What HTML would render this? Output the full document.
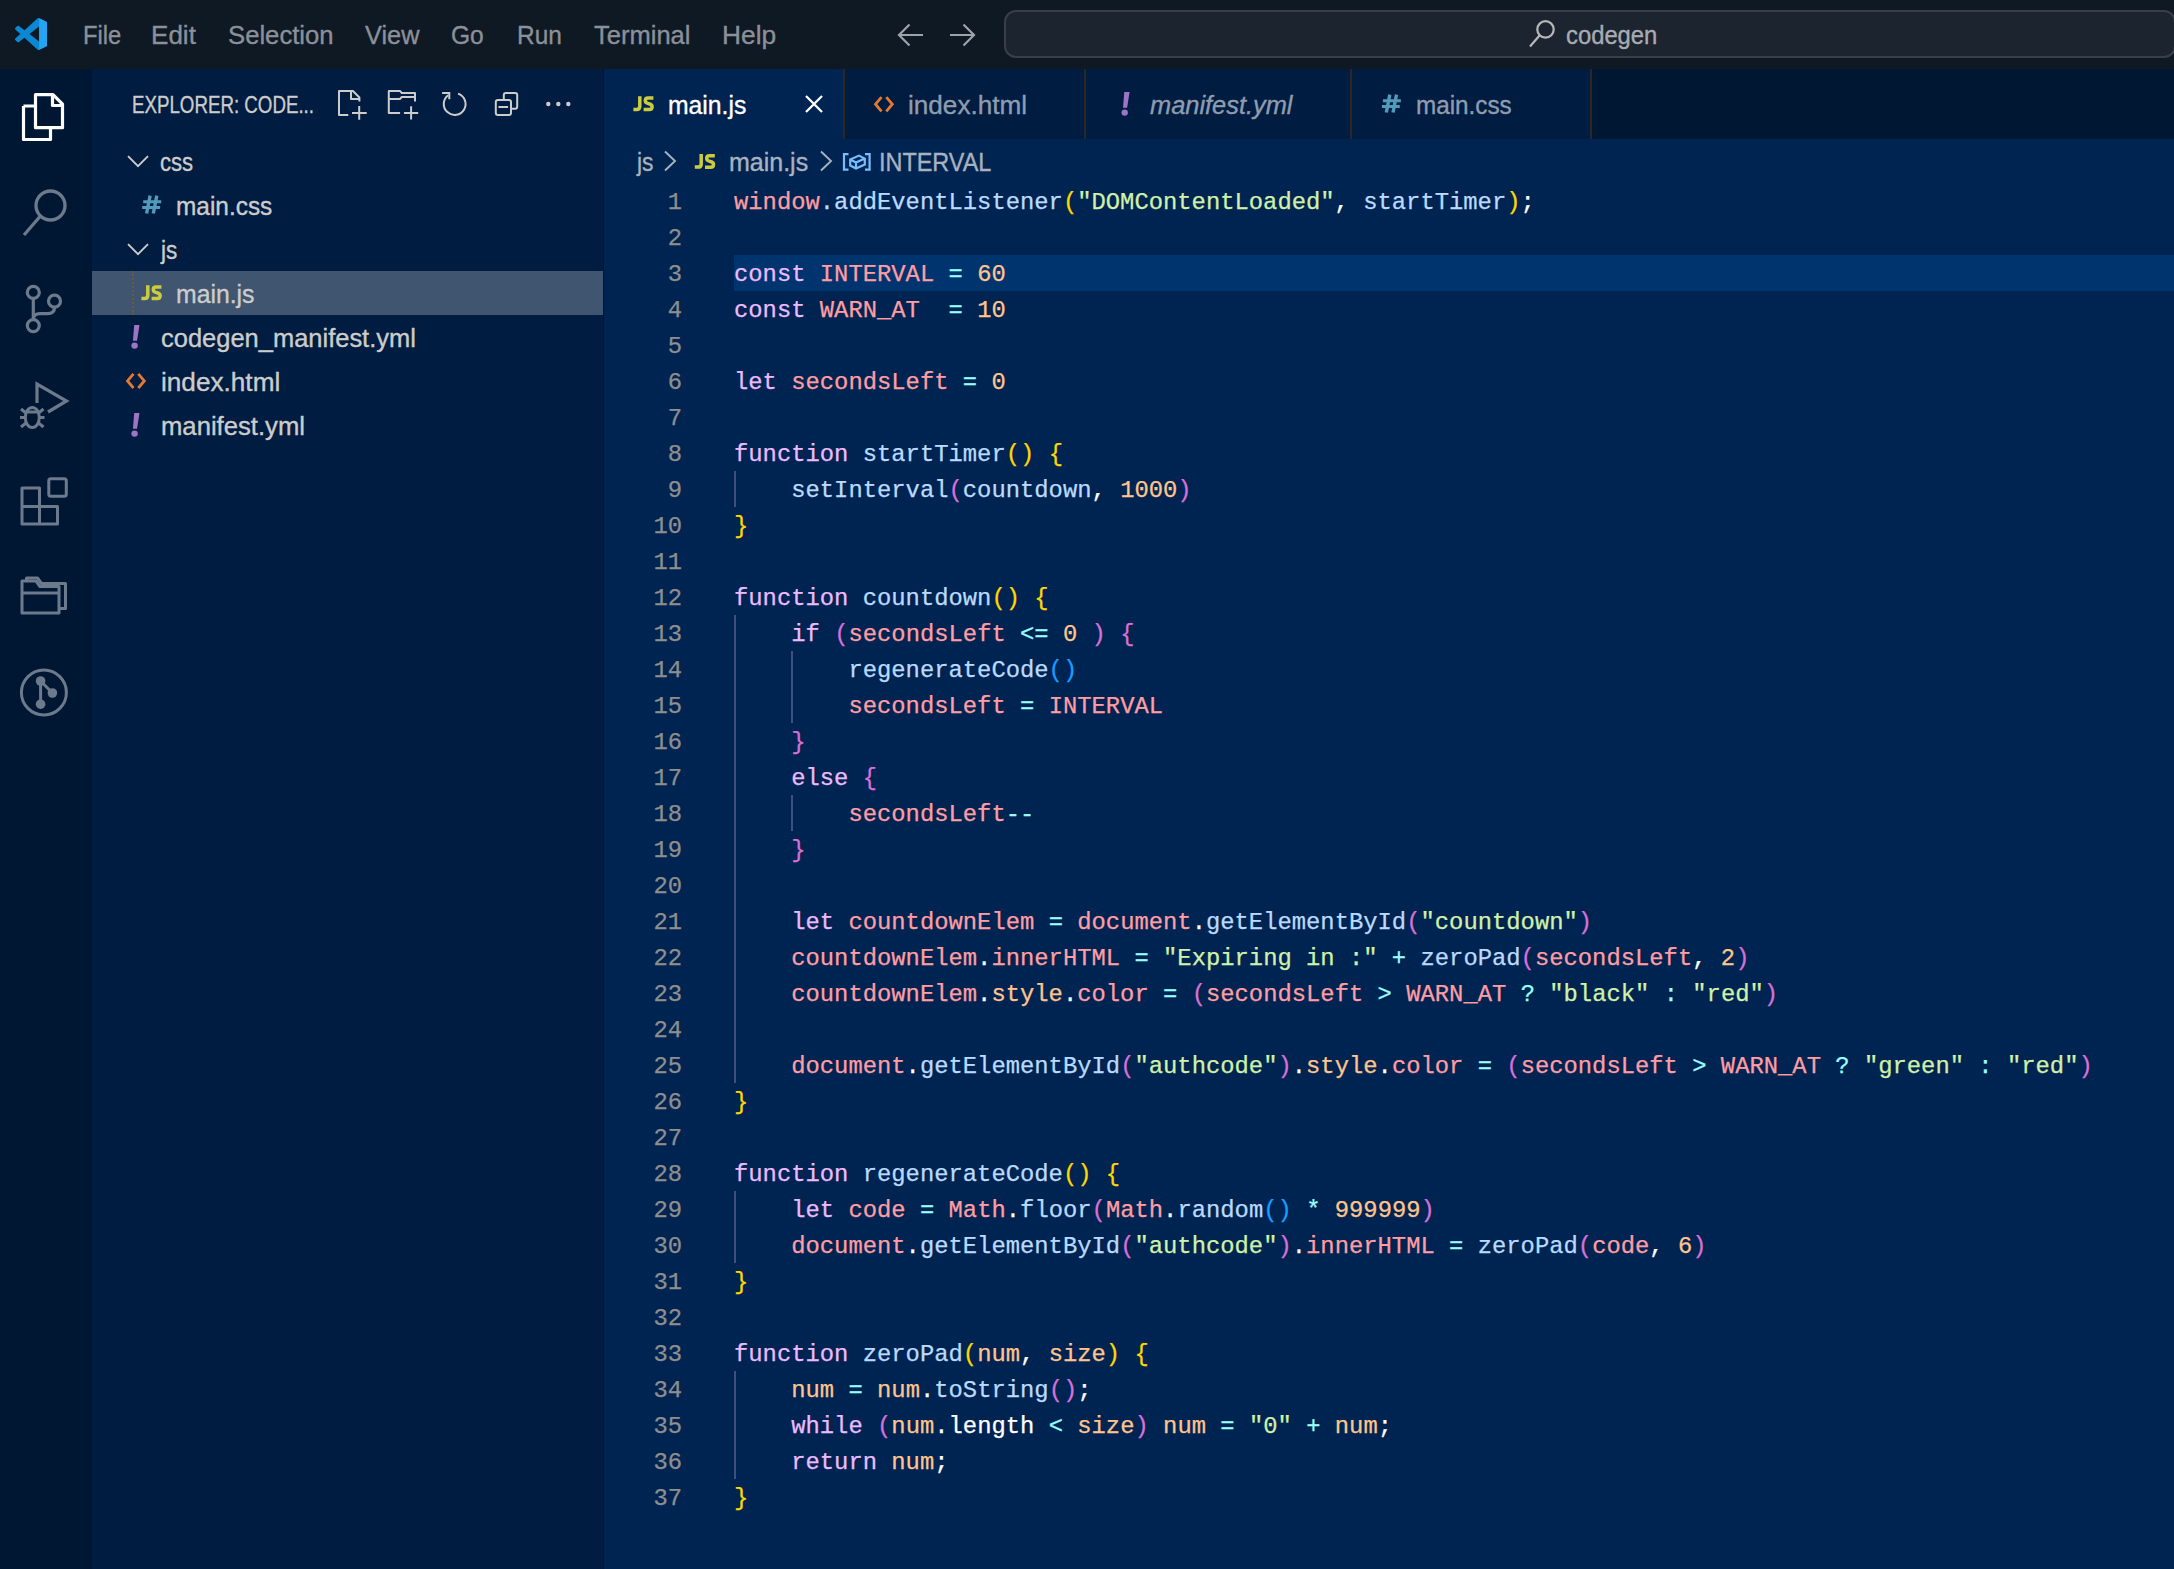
<!DOCTYPE html>
<html><head><meta charset="utf-8">
<style>
*{margin:0;padding:0;box-sizing:border-box}
html,body{width:2174px;height:1569px;overflow:hidden;background:#002451}
body{position:relative;font-family:"Liberation Sans",sans-serif}
.abs{position:absolute}
#title{position:absolute;left:0;top:0;width:2174px;height:69px;background:#0f1924}
.menu{position:absolute;top:19px;height:36px;line-height:36px;font-size:24.5px;color:#8b9099;white-space:nowrap}
#act{position:absolute;left:0;top:69px;width:92px;height:1500px;background:#001733}
#side{position:absolute;left:92px;top:69px;width:512px;height:1500px;background:#001c40}
#sel{position:absolute;left:92px;top:271px;width:512px;height:44px;background:#405570}
.ti{position:absolute;height:44px;line-height:48px;font-size:24.3px;color:#cccccc;white-space:nowrap}
.ico{position:absolute;white-space:nowrap;line-height:1}
#exphdr{position:absolute;left:133px;top:85px;height:40px;line-height:40px;font-size:21px;letter-spacing:-0.9px;color:#cccccc;white-space:nowrap}
#tabstrip{position:absolute;left:604px;top:69px;width:1570px;height:70px;background:#001733}
.tab{position:absolute;top:69px;height:70px;background:#001c40}
.tabb{position:absolute;top:69px;width:2px;height:70px;background:#2b2722}
.tt{position:absolute;top:69px;height:70px;line-height:70px;font-size:24.5px;white-space:nowrap}
.bc{position:absolute;top:139px;height:44px;line-height:44px;font-size:24.5px;color:#a9b2bf;white-space:nowrap}
#hl{position:absolute;left:734px;top:255px;width:1440px;height:36px;background:#00346e}
.ln{position:absolute;left:604px;width:78px;height:36px;line-height:40px;-webkit-text-stroke:0.25px currentColor;text-align:right;font-family:"Liberation Mono",monospace;font-size:23.830px;color:#8e8e8e}
.cl{position:absolute;left:734px;height:36px;line-height:40px;-webkit-text-stroke:0.25px currentColor;font-family:"Liberation Mono",monospace;font-size:23.830px;color:#fff;white-space:pre}
.ig{position:absolute;width:2px;background:#404f7d}
.tx{position:absolute;z-index:5;line-height:normal;-webkit-text-stroke:0.35px currentColor;white-space:nowrap;transform-origin:0 0}
#search{position:absolute;left:1004px;top:10px;width:1172px;height:48px;border:2px solid #393f4a;border-radius:12px;background:#1c2430}
</style></head><body>
<div id="title"></div>

<svg class="abs" style="left:14.8px;top:17.8px" width="32.2" height="32" viewBox="0 0 100 100">
 <path fill="#0a88d4" d="M96.46 10.8L75.86.87a6.23 6.23 0 0 0-7.1 1.2L29.35 38.04 12.19 25.01a4.16 4.16 0 0 0-5.32.24L1.36 30.26a4.17 4.17 0 0 0 0 6.16L16.25 50 1.36 63.58a4.17 4.17 0 0 0 0 6.16l5.51 5.01a4.16 4.16 0 0 0 5.32.24l17.16-13.03 39.41 35.97a6.22 6.22 0 0 0 7.1 1.2l20.6-9.92a6.25 6.25 0 0 0 3.54-5.63V16.43a6.25 6.25 0 0 0-3.54-5.63zm-21.45 62.7L45.1 50l29.91-23.5z"/>
 <path fill="#23a5f1" d="M75.2 0.9 L96.46 10.8 a6.25 6.25 0 0 1 3.54 5.63 V83.57 a6.25 6.25 0 0 1 -3.54 5.63 L75.2 99.1 Z"/>
</svg>

<svg class="abs" style="left:890px;top:18px" width="100" height="34" viewBox="890 18 100 34" fill="none" stroke="#9da3ab" stroke-width="2.2">
 <path d="M923 35 H899 M909.5 24.5 L899 35 L909.5 45.5"/>
 <path d="M950 35 H974 M963.5 24.5 L974 35 L963.5 45.5"/>
</svg>
<div id="search"></div>
<svg class="abs" style="left:1525px;top:17px" width="32" height="34" viewBox="1525 17 32 34" fill="none" stroke="#b8b8b8" stroke-width="2.2">
 <circle cx="1545.5" cy="29.4" r="8.2"/><path d="M1539.5 35.5 L1530 46.5"/>
</svg>
<div id="act"></div>

<svg class="abs" style="left:0;top:69px" width="92" height="700" viewBox="0 69 92 700" fill="none" stroke-linejoin="round">
 <!-- explorer -->
 <path d="M23.5 106 h11 M23.5 106 v33.5 h27 v-11" stroke="#fff" stroke-width="3.2"/>
 <path d="M35.5 94.7 h17.5 l9.5 9.5 v23.5 h-27 z" stroke="#fff" stroke-width="3.2"/>
 <path d="M52.5 95 v10.5 h10" stroke="#fff" stroke-width="3.2"/>
 <!-- search -->
 <circle cx="50.5" cy="205.5" r="14.5" stroke="#6c7a8c" stroke-width="3.3"/>
 <path d="M40 216.5 L24 235" stroke="#6c7a8c" stroke-width="3.3"/>
 <!-- source control -->
 <circle cx="33.3" cy="292.4" r="6" stroke="#6c7a8c" stroke-width="3.2"/>
 <circle cx="33.3" cy="325.6" r="6" stroke="#6c7a8c" stroke-width="3.2"/>
 <circle cx="54.5" cy="301.2" r="6" stroke="#6c7a8c" stroke-width="3.2"/>
 <path d="M33.3 298.5 v21 M54.5 307.2 q0 6.5 -7 6.5 h-7.5 q-6.7 0 -6.7 6" stroke="#6c7a8c" stroke-width="3.2"/>
 <!-- run & debug -->
 <path d="M37 403 V384 L66.5 401 L48 412" stroke="#6c7a8c" stroke-width="3.2" stroke-linejoin="miter"/>
 <ellipse cx="32.3" cy="417.5" rx="7" ry="10" stroke="#6c7a8c" stroke-width="3"/>
 <path d="M25.5 412 h14 M21 409 l5 4 M43.5 409 l-5 4 M20 417.5 h5 M39.5 417.5 h5 M21 427 l5 -4 M43.5 427 l-5 -4" stroke="#6c7a8c" stroke-width="3"/>
 <!-- extensions -->
 <path d="M22 488 h17.5 v18.5 h18 v17.5 h-35.5 z M22 506.5 h17.5 v17.5" stroke="#6c7a8c" stroke-width="3" stroke-linejoin="round"/>
 <rect x="48.8" y="478.7" width="17.5" height="17.5" rx="2" stroke="#6c7a8c" stroke-width="3"/>
 <!-- folder / remote -->
 <path d="M22 581 h14 l4 5.5 h19 v26.5 h-37 z M22 593 h37" stroke="#6c7a8c" stroke-width="3"/>
 <path d="M26.5 581 v-3 h11 l4 5.5 h24 v25 h-6" stroke="#6c7a8c" stroke-width="3"/>
 <!-- git graph -->
 <circle cx="43.9" cy="692.5" r="22.5" stroke="#6c7a8c" stroke-width="3"/>
 <path d="M40.6 681 v23.2 M40.6 681 l11.8 12" stroke="#6c7a8c" stroke-width="3"/>
 <circle cx="40.6" cy="681" r="4.8" fill="#6c7a8c"/>
 <circle cx="52.4" cy="693" r="4.8" fill="#6c7a8c"/>
 <circle cx="40.6" cy="704.2" r="4.8" fill="#6c7a8c"/>
</svg>

<div id="side"></div>
<div id="sel"></div>
<div class="abs" style="left:603px;top:69px;width:1px;height:1500px;background:#001733"></div>
<div class="abs" style="left:132px;top:271px;width:2px;height:44px;border-left:2px dotted #6b5a3a"></div>

<svg class="abs" style="left:330px;top:80px" width="260" height="50" viewBox="330 80 260 50" fill="none" stroke="#cccccc" stroke-width="2" stroke-linejoin="round">
 <path d="M348.3 115 H339 V91 H352.9 L359.4 97.5 V101.6 M351 91 V99 H359.4"/>
 <path d="M352 113 H366.7 M359.2 106 V119.7"/>
 <path d="M400.1 113.1 H388.8 V90.9 H399.9 L401.8 93 H415 V101.6 M388.8 99 H399.9 L401.8 97 H415"/>
 <path d="M404 113.1 H418.2 M411.1 106.2 V119.4"/>
 <path d="M458 93.6 A10.9 10.9 0 1 1 448.2 95.2" />
 <path d="M442.1 92.9 H449.3 V99.3" stroke-linejoin="miter"/>
 <path d="M503.8 98.9 V95 Q503.8 92.9 505.9 92.9 H515.2 Q517.2 92.9 517.2 95 V106.8 Q517.2 108.8 515.2 108.8 H511"/>
 <rect x="495.8" y="99.9" width="15.2" height="15.1" rx="2.2"/>
 <path d="M498.5 107 H508.1"/>
 <circle cx="548.3" cy="104" r="2.2" fill="#cccccc" stroke="none"/>
 <circle cx="558.3" cy="104" r="2.2" fill="#cccccc" stroke="none"/>
 <circle cx="568.3" cy="104" r="2.2" fill="#cccccc" stroke="none"/>
</svg>


<div class="tx" style="left:82.94px;top:20.71px;font-size:25.50px;color:#8b9099;transform:scaleX(0.9303);">File</div>
<div class="tx" style="left:151.14px;top:20.71px;font-size:25.50px;color:#8b9099;transform:scaleX(1.0216);">Edit</div>
<div class="tx" style="left:227.96px;top:20.71px;font-size:25.50px;color:#8b9099;transform:scaleX(1.0069);">Selection</div>
<div class="tx" style="left:365.40px;top:20.71px;font-size:25.50px;color:#8b9099;transform:scaleX(0.9933);">View</div>
<div class="tx" style="left:451.43px;top:20.71px;font-size:25.50px;color:#8b9099;transform:scaleX(0.9635);">Go</div>
<div class="tx" style="left:517.08px;top:20.71px;font-size:25.50px;color:#8b9099;transform:scaleX(0.9580);">Run</div>
<div class="tx" style="left:594.00px;top:20.71px;font-size:25.50px;color:#8b9099;transform:scaleX(1.0014);">Terminal</div>
<div class="tx" style="left:721.73px;top:20.71px;font-size:25.50px;color:#8b9099;transform:scaleX(1.0324);">Help</div>
<div class="tx" style="left:1566.42px;top:21.11px;font-size:25.50px;color:#a8acb2;transform:scaleX(0.9334);">codegen</div>
<div class="tx" style="left:132.25px;top:91.98px;font-size:23.00px;color:#cccccc;transform:scaleX(0.8137);">EXPLORER: CODE...</div>
<div class="tx" style="left:160.04px;top:148.37px;font-size:25.00px;color:#cccccc;transform:scaleX(0.8846);">css</div>
<div class="tx" style="left:176.20px;top:192.27px;font-size:25.00px;color:#cccccc;transform:scaleX(0.9762);">main.css</div>
<div class="tx" style="left:160.70px;top:236.07px;font-size:25.00px;color:#cccccc;transform:scaleX(0.9014);">js</div>
<div class="tx" style="left:176.21px;top:280.17px;font-size:25.00px;color:#cccccc;transform:scaleX(0.9913);">main.js</div>
<div class="tx" style="left:160.98px;top:324.37px;font-size:25.00px;color:#cccccc;transform:scaleX(1.0190);">codegen_manifest.yml</div>
<div class="tx" style="left:160.58px;top:368.17px;font-size:25.00px;color:#cccccc;transform:scaleX(1.0466);">index.html</div>
<div class="tx" style="left:160.57px;top:411.97px;font-size:25.00px;color:#cccccc;transform:scaleX(1.0261);">manifest.yml</div>
<div class="tx" style="left:668.01px;top:90.81px;font-size:25.50px;color:#ffffff;transform:scaleX(0.9696);">main.js</div>
<div class="tx" style="left:907.95px;top:90.81px;font-size:25.50px;color:#8f9cb0;transform:scaleX(1.0247);">index.html</div>
<div class="tx" style="left:1150.20px;top:90.81px;font-size:25.50px;color:#8f9cb0;transform:scaleX(0.9958);font-style:italic;">manifest.yml</div>
<div class="tx" style="left:1416.26px;top:90.81px;font-size:25.50px;color:#8f9cb0;transform:scaleX(0.9517);">main.css</div>
<div class="tx" style="left:636.71px;top:147.91px;font-size:25.50px;color:#a9b2bf;transform:scaleX(0.8947);">js</div>
<div class="tx" style="left:729.19px;top:147.91px;font-size:25.50px;color:#a9b2bf;transform:scaleX(0.9801);">main.js</div>
<div class="tx" style="left:878.56px;top:147.91px;font-size:25.50px;color:#a9b2bf;transform:scaleX(0.9186);">INTERVAL</div>
<div id="tabstrip"></div>

<div class="tab" style="left:604px;width:239px;background:#002451"></div>
<div class="tabb" style="left:843px"></div>
<div class="tab" style="left:845px;width:240px"></div>
<div class="tabb" style="left:1084px"></div>
<div class="tab" style="left:1086px;width:265px"></div>
<div class="tabb" style="left:1350px"></div>
<div class="tab" style="left:1352px;width:239px"></div>
<div class="tabb" style="left:1590px"></div>

<div id="hl"></div>
<div class="ig" style="left:734.0px;top:471px;height:36px"></div>
<div class="ig" style="left:734.0px;top:615px;height:468px"></div>
<div class="ig" style="left:791.2px;top:651px;height:72px"></div>
<div class="ig" style="left:791.2px;top:795px;height:36px"></div>
<div class="ig" style="left:734.0px;top:1191px;height:72px"></div>
<div class="ig" style="left:734.0px;top:1371px;height:108px"></div>
<div class="ln" style="top:183px">1</div><div class="cl" style="top:183px"><span style="color:#ff9da4">window</span><span style="color:#bbdaff">.</span><span style="color:#bbdaff">addEventListener</span><span style="color:#ffd700">(</span><span style="color:#d1f1a9">&quot;DOMContentLoaded&quot;</span>, <span style="color:#bbdaff">startTimer</span><span style="color:#ffd700">)</span>;</div>
<div class="ln" style="top:219px">2</div><div class="cl" style="top:219px"></div>
<div class="ln" style="top:255px">3</div><div class="cl" style="top:255px"><span style="color:#ebbbff">const</span> <span style="color:#ff9da4">INTERVAL</span> <span style="color:#99ffff">=</span> <span style="color:#ffc58f">60</span></div>
<div class="ln" style="top:291px">4</div><div class="cl" style="top:291px"><span style="color:#ebbbff">const</span> <span style="color:#ff9da4">WARN_AT</span>  <span style="color:#99ffff">=</span> <span style="color:#ffc58f">10</span></div>
<div class="ln" style="top:327px">5</div><div class="cl" style="top:327px"></div>
<div class="ln" style="top:363px">6</div><div class="cl" style="top:363px"><span style="color:#ebbbff">let</span> <span style="color:#ff9da4">secondsLeft</span> <span style="color:#99ffff">=</span> <span style="color:#ffc58f">0</span></div>
<div class="ln" style="top:399px">7</div><div class="cl" style="top:399px"></div>
<div class="ln" style="top:435px">8</div><div class="cl" style="top:435px"><span style="color:#ebbbff">function</span> <span style="color:#bbdaff">startTimer</span><span style="color:#ffd700">()</span> <span style="color:#ffd700">{</span></div>
<div class="ln" style="top:471px">9</div><div class="cl" style="top:471px">    <span style="color:#bbdaff">setInterval</span><span style="color:#da70d6">(</span><span style="color:#bbdaff">countdown</span>, <span style="color:#ffc58f">1000</span><span style="color:#da70d6">)</span></div>
<div class="ln" style="top:507px">10</div><div class="cl" style="top:507px"><span style="color:#ffd700">}</span></div>
<div class="ln" style="top:543px">11</div><div class="cl" style="top:543px"></div>
<div class="ln" style="top:579px">12</div><div class="cl" style="top:579px"><span style="color:#ebbbff">function</span> <span style="color:#bbdaff">countdown</span><span style="color:#ffd700">()</span> <span style="color:#ffd700">{</span></div>
<div class="ln" style="top:615px">13</div><div class="cl" style="top:615px">    <span style="color:#ebbbff">if</span> <span style="color:#da70d6">(</span><span style="color:#ff9da4">secondsLeft</span> <span style="color:#99ffff">&lt;=</span> <span style="color:#ffc58f">0</span> <span style="color:#da70d6">)</span> <span style="color:#da70d6">{</span></div>
<div class="ln" style="top:651px">14</div><div class="cl" style="top:651px">        <span style="color:#bbdaff">regenerateCode</span><span style="color:#179fff">()</span></div>
<div class="ln" style="top:687px">15</div><div class="cl" style="top:687px">        <span style="color:#ff9da4">secondsLeft</span> <span style="color:#99ffff">=</span> <span style="color:#ff9da4">INTERVAL</span></div>
<div class="ln" style="top:723px">16</div><div class="cl" style="top:723px">    <span style="color:#da70d6">}</span></div>
<div class="ln" style="top:759px">17</div><div class="cl" style="top:759px">    <span style="color:#ebbbff">else</span> <span style="color:#da70d6">{</span></div>
<div class="ln" style="top:795px">18</div><div class="cl" style="top:795px">        <span style="color:#ff9da4">secondsLeft</span><span style="color:#99ffff">--</span></div>
<div class="ln" style="top:831px">19</div><div class="cl" style="top:831px">    <span style="color:#da70d6">}</span></div>
<div class="ln" style="top:867px">20</div><div class="cl" style="top:867px"></div>
<div class="ln" style="top:903px">21</div><div class="cl" style="top:903px">    <span style="color:#ebbbff">let</span> <span style="color:#ff9da4">countdownElem</span> <span style="color:#99ffff">=</span> <span style="color:#ff9da4">document</span>.<span style="color:#bbdaff">getElementById</span><span style="color:#da70d6">(</span><span style="color:#d1f1a9">&quot;countdown&quot;</span><span style="color:#da70d6">)</span></div>
<div class="ln" style="top:939px">22</div><div class="cl" style="top:939px">    <span style="color:#ff9da4">countdownElem</span>.<span style="color:#ff9da4">innerHTML</span> <span style="color:#99ffff">=</span> <span style="color:#d1f1a9">&quot;Expiring in :&quot;</span> <span style="color:#99ffff">+</span> <span style="color:#bbdaff">zeroPad</span><span style="color:#da70d6">(</span><span style="color:#ff9da4">secondsLeft</span>, <span style="color:#ffc58f">2</span><span style="color:#da70d6">)</span></div>
<div class="ln" style="top:975px">23</div><div class="cl" style="top:975px">    <span style="color:#ff9da4">countdownElem</span>.<span style="color:#ffc58f">style</span>.<span style="color:#ff9da4">color</span> <span style="color:#99ffff">=</span> <span style="color:#da70d6">(</span><span style="color:#ff9da4">secondsLeft</span> <span style="color:#99ffff">&gt;</span> <span style="color:#ff9da4">WARN_AT</span> <span style="color:#99ffff">?</span> <span style="color:#d1f1a9">&quot;black&quot;</span> <span style="color:#99ffff">:</span> <span style="color:#d1f1a9">&quot;red&quot;</span><span style="color:#da70d6">)</span></div>
<div class="ln" style="top:1011px">24</div><div class="cl" style="top:1011px"></div>
<div class="ln" style="top:1047px">25</div><div class="cl" style="top:1047px">    <span style="color:#ff9da4">document</span>.<span style="color:#bbdaff">getElementById</span><span style="color:#da70d6">(</span><span style="color:#d1f1a9">&quot;authcode&quot;</span><span style="color:#da70d6">)</span>.<span style="color:#ffc58f">style</span>.<span style="color:#ff9da4">color</span> <span style="color:#99ffff">=</span> <span style="color:#da70d6">(</span><span style="color:#ff9da4">secondsLeft</span> <span style="color:#99ffff">&gt;</span> <span style="color:#ff9da4">WARN_AT</span> <span style="color:#99ffff">?</span> <span style="color:#d1f1a9">&quot;green&quot;</span> <span style="color:#99ffff">:</span> <span style="color:#d1f1a9">&quot;red&quot;</span><span style="color:#da70d6">)</span></div>
<div class="ln" style="top:1083px">26</div><div class="cl" style="top:1083px"><span style="color:#ffd700">}</span></div>
<div class="ln" style="top:1119px">27</div><div class="cl" style="top:1119px"></div>
<div class="ln" style="top:1155px">28</div><div class="cl" style="top:1155px"><span style="color:#ebbbff">function</span> <span style="color:#bbdaff">regenerateCode</span><span style="color:#ffd700">()</span> <span style="color:#ffd700">{</span></div>
<div class="ln" style="top:1191px">29</div><div class="cl" style="top:1191px">    <span style="color:#ebbbff">let</span> <span style="color:#ff9da4">code</span> <span style="color:#99ffff">=</span> <span style="color:#ff9da4">Math</span>.<span style="color:#bbdaff">floor</span><span style="color:#da70d6">(</span><span style="color:#ff9da4">Math</span>.<span style="color:#bbdaff">random</span><span style="color:#179fff">()</span> <span style="color:#99ffff">*</span> <span style="color:#ffc58f">999999</span><span style="color:#da70d6">)</span></div>
<div class="ln" style="top:1227px">30</div><div class="cl" style="top:1227px">    <span style="color:#ff9da4">document</span>.<span style="color:#bbdaff">getElementById</span><span style="color:#da70d6">(</span><span style="color:#d1f1a9">&quot;authcode&quot;</span><span style="color:#da70d6">)</span>.<span style="color:#ff9da4">innerHTML</span> <span style="color:#99ffff">=</span> <span style="color:#bbdaff">zeroPad</span><span style="color:#da70d6">(</span><span style="color:#ff9da4">code</span>, <span style="color:#ffc58f">6</span><span style="color:#da70d6">)</span></div>
<div class="ln" style="top:1263px">31</div><div class="cl" style="top:1263px"><span style="color:#ffd700">}</span></div>
<div class="ln" style="top:1299px">32</div><div class="cl" style="top:1299px"></div>
<div class="ln" style="top:1335px">33</div><div class="cl" style="top:1335px"><span style="color:#ebbbff">function</span> <span style="color:#bbdaff">zeroPad</span><span style="color:#ffd700">(</span><span style="color:#ffc58f">num</span>, <span style="color:#ffc58f">size</span><span style="color:#ffd700">)</span> <span style="color:#ffd700">{</span></div>
<div class="ln" style="top:1371px">34</div><div class="cl" style="top:1371px">    <span style="color:#ffc58f">num</span> <span style="color:#99ffff">=</span> <span style="color:#ffc58f">num</span>.<span style="color:#bbdaff">toString</span><span style="color:#da70d6">()</span>;</div>
<div class="ln" style="top:1407px">35</div><div class="cl" style="top:1407px">    <span style="color:#ebbbff">while</span> <span style="color:#da70d6">(</span><span style="color:#ffc58f">num</span>.length <span style="color:#99ffff">&lt;</span> <span style="color:#ffc58f">size</span><span style="color:#da70d6">)</span> <span style="color:#ffc58f">num</span> <span style="color:#99ffff">=</span> <span style="color:#d1f1a9">&quot;0&quot;</span> <span style="color:#99ffff">+</span> <span style="color:#ffc58f">num</span>;</div>
<div class="ln" style="top:1443px">36</div><div class="cl" style="top:1443px">    <span style="color:#ebbbff">return</span> <span style="color:#ffc58f">num</span>;</div>
<div class="ln" style="top:1479px">37</div><div class="cl" style="top:1479px"><span style="color:#ffd700">}</span></div>

<svg class="abs" style="left:0;top:0;z-index:4" width="2174" height="1569" viewBox="0 0 2174 1569">
<path d="M128 156.2 L138 166.2 L148 156.2" stroke="#cccccc" stroke-width="1.9" fill="none"/>
<g transform="translate(142.2,195.4)" stroke="#519aba" fill="none"><path d="M7.9 0.2 L4.4 18.1 M14.6 0.2 L11.1 18.1" stroke-width="3.4"/><path d="M1 6.35 H19 M0 12.05 H17.9" stroke-width="2.9"/></g>
<path d="M128 244.2 L138 254.2 L148 244.2" stroke="#cccccc" stroke-width="1.9" fill="none"/>
<g transform="translate(141.4,285.2)" stroke="#cbcb41" fill="none" stroke-width="3.5"><path d="M6.4 0 V10 Q6.4 13.2 3.4 13.2 H0"/><path d="M20 1.75 H14.6 Q11.9 1.75 11.9 4.4 Q11.9 6.6 14.3 7.2 L16.4 7.8 Q18.7 8.5 18.7 10.5 Q18.7 13.25 15.8 13.25 H10.2"/></g>
<g transform="translate(132.9,325)" fill="#a074c4"><path d="M1.3 0 H6.6 L4.1 15.8 H0 Z"/><circle cx="1.7" cy="20.6" r="3.2"/></g>
<g transform="translate(125.9,373.2)" stroke="#e37933" fill="none" stroke-width="2.8" stroke-linejoin="miter"><path d="M7.6 0.6 L1.6 7.7 L7.6 14.8 M12.4 0.6 L18.4 7.7 L12.4 14.8"/></g>
<g transform="translate(132.9,413)" fill="#a074c4"><path d="M1.3 0 H6.6 L4.1 15.8 H0 Z"/><circle cx="1.7" cy="20.6" r="3.2"/></g>
<g transform="translate(633.4,96.2)" stroke="#cbcb41" fill="none" stroke-width="3.5"><path d="M6.4 0 V10 Q6.4 13.2 3.4 13.2 H0"/><path d="M20 1.75 H14.6 Q11.9 1.75 11.9 4.4 Q11.9 6.6 14.3 7.2 L16.4 7.8 Q18.7 8.5 18.7 10.5 Q18.7 13.25 15.8 13.25 H10.2"/></g>
<path d="M806 96 L822 112 M822 96 L806 112" stroke="#ffffff" stroke-width="2.3" fill="none"/>
<g transform="translate(873.9,96.5)" stroke="#e37933" fill="none" stroke-width="2.8" stroke-linejoin="miter"><path d="M7.6 0.6 L1.6 7.7 L7.6 14.8 M12.4 0.6 L18.4 7.7 L12.4 14.8"/></g>
<g transform="translate(1123,92)" fill="#a074c4"><path d="M1.3 0 H6.6 L4.1 15.8 H0 Z"/><circle cx="1.7" cy="20.6" r="3.2"/></g>
<g transform="translate(1381.9,94.4)" stroke="#519aba" fill="none"><path d="M7.9 0.2 L4.4 18.1 M14.6 0.2 L11.1 18.1" stroke-width="3.4"/><path d="M1 6.35 H19 M0 12.05 H17.9" stroke-width="2.9"/></g>
<path d="M665 151.5 L675 161 L665 170.5 M821 151.5 L831 161 L821 170.5" stroke="#a9b2bf" stroke-width="1.9" fill="none"/>
<g transform="translate(694.8,153.9)" stroke="#cbcb41" fill="none" stroke-width="3.5"><path d="M6.4 0 V10 Q6.4 13.2 3.4 13.2 H0"/><path d="M20 1.75 H14.6 Q11.9 1.75 11.9 4.4 Q11.9 6.6 14.3 7.2 L16.4 7.8 Q18.7 8.5 18.7 10.5 Q18.7 13.25 15.8 13.25 H10.2"/></g>
<g stroke="#75beff" fill="none" stroke-width="2.2">
 <path d="M848.5 154.2 H844 V169.6 H848.5 M865 154.2 H869.6 V169.6 H865"/>
 <path d="M850.2 159.5 L859 155.6 L864.8 158.6 V164.6 L856 168.6 L850.2 165.6 Z M850.2 159.5 L856 162.5 L864.8 158.6 M856 162.5 V168.6"/>
</g>
</svg>

</body></html>
